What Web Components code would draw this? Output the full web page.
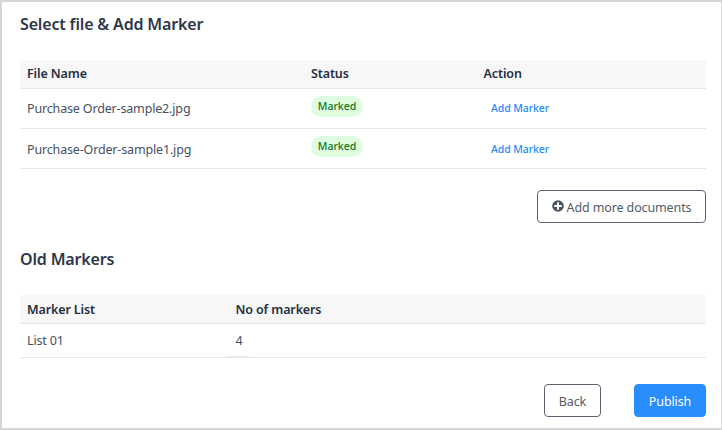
<!DOCTYPE html>
<html lang="en">
<head>
<meta charset="utf-8">
<title>Select file &amp; Add Marker</title>
<style>
html,body{margin:0;height:100%}
body{font-family:"Noto Sans","Open Sans",sans-serif;font-size:12.5px;color:#47505f;background:#fff}
</style>
</head>
<body>
<marker-page></marker-page>
<script>
const define = (name, html) => {
  const t = document.createElement('template');
  t.innerHTML = html;
  customElements.define(name, class extends HTMLElement {
    constructor() {
      super();
      this.attachShadow({mode: 'open'}).append(t.content.cloneNode(true));
    }
  });
};

define('section-title', `<style>
:host{display:block;height:24px;line-height:24px;font-size:16px;font-weight:600;color:#2d3748;white-space:nowrap;letter-spacing:-.16px}
</style><slot></slot>`);

define('data-row', `<style>
:host{display:grid;grid-template-columns:var(--cols);align-items:center;box-sizing:border-box;height:40px;padding-left:7px;border-bottom:1px solid #e6e6e8;white-space:nowrap;line-height:18px;letter-spacing:-.16px}
:host([head]){height:29px;background:#f7f7f7;color:#252f3f;font-weight:600;letter-spacing:-.12px}
</style><slot></slot>`);

define('status-badge', `<style>
:host{display:block;width:52px;height:21px;line-height:20px;border-radius:11px;background:#dffbe0;color:#13761a;font-size:10.5px;font-weight:500;text-align:center;margin-bottom:5px;letter-spacing:0}
</style><slot></slot>`);

define('link-action', `<style>
:host{display:block;padding-left:7.5px;color:#268bfb;font-size:10.5px;font-weight:500;letter-spacing:-.1px}
</style><slot></slot>`);

define('push-button', `<style>
:host{display:flex;align-items:center;justify-content:center;box-sizing:border-box;height:33px;padding-top:1px;border:1px solid #5d6272;border-radius:4px;color:#535b69;background:#fff;font-size:12.5px;letter-spacing:-.12px;white-space:nowrap}
:host([primary]){background:#288dfd;border-color:#288dfd;color:#fff}
</style><slot></slot>`);

define('plus-icon', `<style>
:host{display:block;width:12px;height:12px;margin:0 3px 2px 0}
svg{display:block}
</style><svg width="12" height="12" viewBox="0 0 12 12"><circle cx="6" cy="6" r="5.8" fill="#4c5362"/><path d="M6 3v6M3 6h6" stroke="#fff" stroke-width="1.9" stroke-linecap="round"/></svg>`);

define('marker-page', `<style>
:host{display:block;box-sizing:border-box;width:722px;height:430px;border:2px solid #d6d6d6;border-right-width:1px;padding:10px 15px 0 18px;background:#fff}
.files{margin-top:24px;--cols:284px 172.5px 1fr}
.files link-action{padding-bottom:2px}
.files data-row:last-child>span{padding-top:2px}
.files data-row:last-child>link-action{padding-bottom:0}
.lists{margin-top:24px;--cols:208.5px 1fr}
.lists data-row[head]>span{padding-top:1px}
.lists data-row:nth-child(2){height:34px}
.more{display:flex;justify-content:flex-end;margin:21px 0 24px}
.foot{display:flex;justify-content:flex-end;gap:33px;margin-top:26px}
.count{position:relative;align-self:stretch;display:flex;align-items:center}
.count::after{content:"";position:absolute;left:-8px;bottom:0;width:21px;height:1px;background:#e9e9e9}
</style>
<section-title>Select file &amp; Add Marker</section-title>
<div class="files">
<data-row head><span>File Name</span><span>Status</span><span>Action</span></data-row>
<data-row><span>Purchase Order-sample2.jpg</span><status-badge>Marked</status-badge><link-action>Add Marker</link-action></data-row>
<data-row><span>Purchase-Order-sample1.jpg</span><status-badge>Marked</status-badge><link-action>Add Marker</link-action></data-row>
</div>
<div class="more"><push-button style="width:169px"><plus-icon></plus-icon><span>Add more documents</span></push-button></div>
<section-title>Old Markers</section-title>
<div class="lists">
<data-row head><span>Marker List</span><span>No of markers</span></data-row>
<data-row><span>List 01</span><span class="count">4</span></data-row>
</div>
<div class="foot"><push-button style="width:57px">Back</push-button><push-button primary style="width:72px">Publish</push-button></div>`);
</script>
</body>
</html>
